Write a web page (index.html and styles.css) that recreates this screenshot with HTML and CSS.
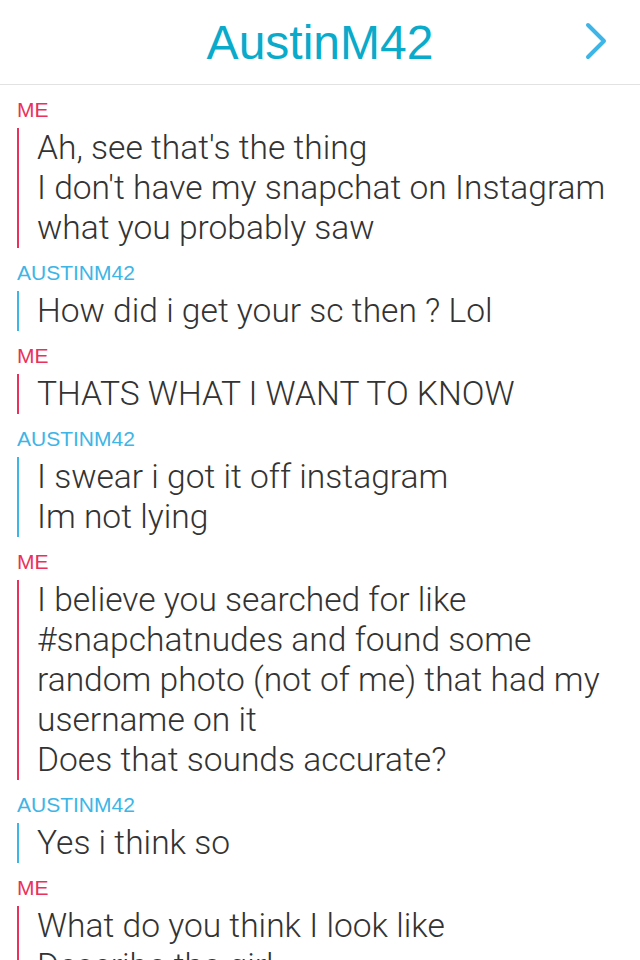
FILE: index.html
```html
<!DOCTYPE html>
<html>
<head>
<meta charset="utf-8">
<link rel="stylesheet" href="styles.css">
</head>
<body>
<header class="header">
  <h1 class="title">AustinM42</h1>
  <svg class="chevron" width="24" height="40" viewBox="0 0 24 40"><path d="M4 4 L20 20 L4 36" fill="none" stroke="#3db5e6" stroke-width="4" stroke-linecap="round" stroke-linejoin="round"/></svg>
</header>
<main class="chat">
  <section class="msg me">
    <div class="who">ME</div>
    <div class="body">
      <p>Ah, see that's the thing</p>
      <p>I don't have my snapchat on Instagram</p>
      <p>what you probably saw</p>
    </div>
  </section>
  <section class="msg them">
    <div class="who">AUSTINM42</div>
    <div class="body">
      <p>How did i get your sc then ? Lol</p>
    </div>
  </section>
  <section class="msg me">
    <div class="who">ME</div>
    <div class="body">
      <p>THATS WHAT I WANT TO KNOW</p>
    </div>
  </section>
  <section class="msg them">
    <div class="who">AUSTINM42</div>
    <div class="body">
      <p>I swear i got it off instagram</p>
      <p>Im not lying</p>
    </div>
  </section>
  <section class="msg me">
    <div class="who">ME</div>
    <div class="body">
      <p>I believe you searched for like<br>#snapchatnudes and found some<br>random photo (not of me) that had my<br>username on it</p>
      <p>Does that sounds accurate?</p>
    </div>
  </section>
  <section class="msg them">
    <div class="who">AUSTINM42</div>
    <div class="body">
      <p>Yes i think so</p>
    </div>
  </section>
  <section class="msg me">
    <div class="who">ME</div>
    <div class="body">
      <p>What do you think I look like</p>
      <p>Describe the girl</p>
    </div>
  </section>
</main>
</body>
</html>
```
FILE: styles.css
```css
html, body {
  margin: 0;
  padding: 0;
  background: #fff;
}
body {
  width: 640px;
  height: 960px;
  overflow: hidden;
  font-family: "Liberation Sans", Arial, sans-serif;
}
.header {
  position: relative;
  height: 84px;
  border-bottom: 1px solid #e2e2e2;
  display: flex;
  align-items: center;
  justify-content: center;
}
.title {
  margin: 0;
  font-weight: normal;
  font-size: 48px;
  color: #0aaacb;
  letter-spacing: 0;
}
.chevron {
  position: absolute;
  right: 32px;
  top: 21px;
}
.chat {
  padding: 13px 0 0 17px;
}
.msg {
  margin-bottom: 13px;
}
.who {
  font-size: 21px;
  line-height: 24px;
  height: 24px;
}
.me .who { color: #e9315b; }
.them .who { color: #3db5e6; }
.body {
  margin-top: 6px;
  border-left: 2px solid;
  padding-left: 18px;
  padding-right: 10px;
}
.me .body { border-color: #e9315b; }
.them .body { border-color: #3db5e6; }
.body p {
  margin: 0;
  font-family: Roboto, "Liberation Sans", sans-serif;
  font-weight: 300;
  font-size: 33.6px;
  line-height: 40px;
  color: #333;
  white-space: nowrap;
}
```
